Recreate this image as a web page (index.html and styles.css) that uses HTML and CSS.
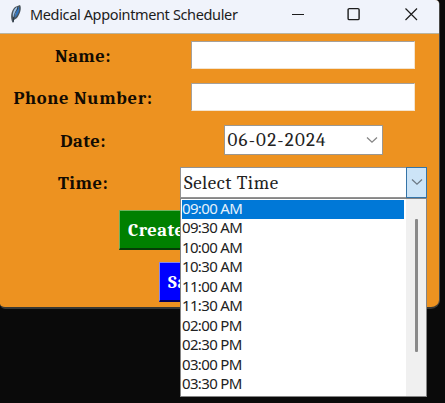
FILE: index.html
```html
<!DOCTYPE html>
<html lang="en">
<head>
<meta charset="utf-8">
<title>Medical Appointment Scheduler</title>
<link rel="stylesheet" href="styles.css">
</head>
<body>
<main class="window">
  <header class="titlebar">
    <svg class="feather" width="14" height="20" viewBox="0 0 14 20">
      <path d="M3.500 18.500C1 13 2 7 6 3l5-2c2 3 0 9-3 13l-3 2-.5 2.500z" fill="#4a545c"/>
      <path d="M4 13C3 8 6 4 8 3c0 4-1 7-3 10z" fill="#a3c6ea"/>
      <path d="M9.500 2.500c2 4-1 9-4 11.500 1-4 2-7 4-11.500z" fill="#2f74c0"/>
      <path d="M9 4C6 8 4.500 12 4.300 18" fill="none" stroke="#22303e" stroke-width=".8"/>
    </svg>
    <h1 class="title">Medical Appointment Scheduler</h1>
    <svg class="controls" width="128" height="14" viewBox="0 0 128 14" fill="none" stroke="#1c1c1c" stroke-width="1.2">
      <path d="M0 7.500h12" stroke-width="1"/>
      <rect x="56.1" y="1.600" width="11" height="11" rx="1.200" stroke-width="1.4"/>
      <path d="M113.500 1.500l11.500 11.500M125 1.500L113.500 13"/>
    </svg>
  </header>
  <form class="form">
    <div class="row"><label class="label">Name:</label><div class="cell"><div class="entry"></div></div></div>
    <div class="row"><label class="label phone">Phone Number:</label><div class="cell"><div class="entry"></div></div></div>
    <div class="row"><label class="label">Date:</label><div class="cell">
      <div class="datebox"><span class="date-value">06-02-2024</span><svg width="12" height="8" viewBox="0 0 12 8" fill="none" stroke="#858585" stroke-width="1.3"><path d="M1 1.500l5 4.700 5-4.700"/></svg></div>
    </div></div>
    <div class="row"><label class="label">Time:</label><div class="cell">
      <div class="combo"><span class="combo-value">Select Time</span><span class="arrow"><svg width="12" height="8" viewBox="0 0 12 8" fill="none" stroke="#6d7a85" stroke-width="1.3"><path d="M1 1.500l5 4.700 5-4.700"/></svg></span>
        <div class="popup">
          <ul class="options">
            <li class="option selected">09:00 AM</li>
            <li class="option">09:30 AM</li>
            <li class="option">10:00 AM</li>
            <li class="option">10:30 AM</li>
            <li class="option">11:00 AM</li>
            <li class="option">11:30 AM</li>
            <li class="option">02:00 PM</li>
            <li class="option">02:30 PM</li>
            <li class="option">03:00 PM</li>
            <li class="option">03:30 PM</li>
          </ul>
          <div class="track"><div class="thumb"></div></div>
        </div>
      </div>
    </div></div>
    <div class="actions">
      <button type="button" class="btn create">Create</button>
      <button type="button" class="btn save">Save</button>
    </div>
  </form>
</main>
</body>
</html>
```
FILE: styles.css
```css
* { box-sizing: border-box; }
body { margin: 0; height: 403px; overflow: hidden; background: #0a0a0a; }
.window {
  width: 440px; height: 309px;
  border-right: 1px solid #4a4a48; border-bottom: 2px solid #383834;
  border-radius: 0 5px 9px 5px;
  background: #ed9220;
}
.titlebar {
  height: 34px; display: flex; align-items: center;
  padding: 0 0 5px 9px;
  background: #f0f3fb;
  border-bottom: 1px solid #b9b4a0;
  border-radius: 0 4px 0 0;
}
.feather { flex: none; }
.title {
  margin: 0 0 0 7px; width: 262px; white-space: nowrap;
  font: 400 14.5px/20px "Noto Sans", "Open Sans", sans-serif;
  letter-spacing: -.36px; color: #1c1c1c;
}
.controls { flex: none; }
.form { font-family: Cambria, Caladea, "DejaVu Serif Condensed", "DejaVu Serif", serif; }
.row { display: grid; grid-template-columns: 166px 274px; height: 42.3px; align-items: center; }
.label { padding-top: 2px; text-align: center; font-size: 18.5px; font-weight: 700; letter-spacing: .5px; line-height: 24px; color: #120b02; white-space: nowrap; }
.phone { letter-spacing: .65px; }
.cell { display: flex; justify-content: center; }
.entry { width: 224px; height: 28px; background: #fff; border: 1px solid #f3e4cf; border-top-color: #a5a09a; border-left-color: #a5a09a; }
.datebox {
  width: 159px; height: 30px; padding: 0 4px 0 3px;
  display: flex; align-items: center; justify-content: space-between;
  background: #fff; border: 1px solid #9b9790; font-size: 19px; color: #222;
}
.date-value { letter-spacing: 1.2px; padding-top: 1px; }
.combo {
  position: relative; width: 247px; height: 31px; padding-left: 3px; margin-left: 1px;
  display: flex; align-items: center; justify-content: space-between;
  background: #fff; border: 1px solid #929292; font-size: 19px; color: #222;
}
.combo-value { letter-spacing: .55px; padding-top: 2px; }
.arrow {
  width: 21px; height: 31px; margin: -1px; flex: none;
  display: flex; align-items: center; justify-content: center;
  background: #cce4f7; border: 1px solid #3474a8;
}
.popup {
  position: absolute; z-index: 2; left: -1px; top: 30px;
  width: 247px; height: 199px; display: flex; justify-content: space-between;
  background: #fff; border: 1px solid #858585;
}
.options { margin: 0; padding: 1px 0 0 1px; list-style: none; width: 223px; }
.option {
  height: 19.5px; font: 400 15px/17px "Noto Sans", "Open Sans", sans-serif;
  letter-spacing: -.65px; color: #222; white-space: nowrap;
}
.selected { background: #0078d7; color: #e5f1fb; }
.track { width: 20px; background: #f0f0f0; padding: 20px 0 0 9px; }
.thumb { width: 3px; height: 133px; background: #8a8a8a; border-radius: 1px; }
.actions { padding-top: 7px; display: flex; flex-direction: column; align-items: center; gap: 12px; }
.btn {
  height: 40px; padding: 1px 0 0 8px; text-align: left; color: #fff;
  font: 700 18.5px/24px Cambria, Caladea, "DejaVu Serif Condensed", "DejaVu Serif", serif;
  letter-spacing: .5px;
  border: 1px solid; border-bottom-width: 2px;
}
.create { width: 201px; background: #008000; border-color: #72b35e #063b06 #063b06 #72b35e; }
.save { width: 121px; background: #00f; border-color: #8686ef #000060 #000060 #8686ef; }
```
